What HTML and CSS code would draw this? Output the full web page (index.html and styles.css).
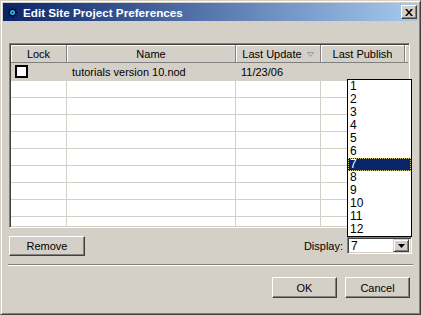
FILE: index.html
```html
<!DOCTYPE html>
<html lang="en">
<head>
    <meta charset="UTF-8">
    <title>Edit Site Project Preferences</title>
    <link rel="stylesheet" href="styles.css">
</head>
<body>
    <div class="window">
        <div class="titlebar">
            <svg class="app-icon" width="11" height="11" viewBox="0 0 11 11">
                <path d="M5.5 0 L6.8 2.8 L9.5 1.5 L8.2 4.2 L11 5.5 L8.2 6.8 L9.5 9.5 L6.8 8.2 L5.5 11 L4.2 8.2 L1.5 9.5 L2.8 6.8 L0 5.5 L2.8 4.2 L1.5 1.5 L4.2 2.8 Z" fill="#000028"/>
                <circle cx="5.5" cy="5.5" r="2.5" fill="#20c8d8"/>
                <circle cx="5.5" cy="5.5" r="1" fill="#103090"/>
            </svg>
            <span class="title">Edit Site Project Preferences</span>
            <button class="close-btn">
                <svg width="8" height="7" viewBox="0 0 8 7">
                    <path d="M0 0 H2 L4 2.5 L6 0 H8 L5 3.5 L8 7 H6 L4 4.5 L2 7 H0 L3 3.5 Z" fill="#000"/>
                </svg>
            </button>
        </div>

        <div class="content">
            <div class="list">
                <div class="list-head">
                    <div class="th">Lock</div>
                    <div class="th">Name</div>
                    <div class="th">Last Update
                        <svg class="sort-icon" width="7" height="5" viewBox="0 0 7 5">
                            <path d="M0.5 0.5 H6.5 L3.5 4.5 Z" fill="none" stroke="#9a9a9a"/>
                        </svg>
                    </div>
                    <div class="th">Last Publish</div>
                    <div class="th th-fill"></div>
                </div>
                <div class="list-body">
                    <div class="row selected">
                        <div class="cell"><span class="checkbox"></span></div>
                        <div class="cell">tutorials version 10.nod</div>
                        <div class="cell">11/23/06</div>
                        <div class="cell"></div>
                        <div class="cell fill"></div>
                    </div>
                    <div class="row"><div class="cell"></div><div class="cell"></div><div class="cell"></div><div class="cell"></div><div class="cell fill"></div></div>
                    <div class="row"><div class="cell"></div><div class="cell"></div><div class="cell"></div><div class="cell"></div><div class="cell fill"></div></div>
                    <div class="row"><div class="cell"></div><div class="cell"></div><div class="cell"></div><div class="cell"></div><div class="cell fill"></div></div>
                    <div class="row"><div class="cell"></div><div class="cell"></div><div class="cell"></div><div class="cell"></div><div class="cell fill"></div></div>
                    <div class="row"><div class="cell"></div><div class="cell"></div><div class="cell"></div><div class="cell"></div><div class="cell fill"></div></div>
                    <div class="row"><div class="cell"></div><div class="cell"></div><div class="cell"></div><div class="cell"></div><div class="cell fill"></div></div>
                    <div class="row"><div class="cell"></div><div class="cell"></div><div class="cell"></div><div class="cell"></div><div class="cell fill"></div></div>
                    <div class="row"><div class="cell"></div><div class="cell"></div><div class="cell"></div><div class="cell"></div><div class="cell fill"></div></div>
                    <div class="row"><div class="cell"></div><div class="cell"></div><div class="cell"></div><div class="cell"></div><div class="cell fill"></div></div>
                </div>
            </div>

            <div class="controls">
                <button class="btn btn-remove">Remove</button>
                <span class="display-label">Display:</span>
                <div class="combo">
                    <span class="combo-value">7</span>
                    <span class="combo-arrow">
                        <svg width="7" height="4" viewBox="0 0 7 4"><path d="M0 0 H7 L3.5 4 Z" fill="#000"/></svg>
                    </span>
                    <ul class="dropdown">
                        <li>1</li>
                        <li>2</li>
                        <li>3</li>
                        <li>4</li>
                        <li>5</li>
                        <li>6</li>
                        <li class="active">7</li>
                        <li>8</li>
                        <li>9</li>
                        <li>10</li>
                        <li>11</li>
                        <li>12</li>
                    </ul>
                </div>
            </div>

            <div class="separator"></div>

            <div class="buttons">
                <button class="btn btn-dialog">OK</button>
                <button class="btn btn-dialog">Cancel</button>
            </div>
        </div>
    </div>
</body>
</html>
```

FILE: styles.css
```css
* {
    box-sizing: border-box;
}

body {
    margin: 0;
    background-color: #D4D0C8;
    font-family: "Liberation Sans", Arial, sans-serif;
    font-size: 11px;
    color: #000000;
}

.window {
    width: 421px;
    height: 315px;
    padding: 1px;
    background-color: #D4D0C8;
    border: 1px solid;
    border-color: #D4D0C8 #404040 #404040 #D4D0C8;
    box-shadow: inset 1px 1px #FFFFFF, inset -1px -1px #808080;
}

.titlebar {
    height: 18px;
    margin: 1px;
    display: flex;
    align-items: center;
    padding-left: 4px;
    padding-right: 1px;
    background: linear-gradient(to right, #0A246A, #A6CAF0);
}

.app-icon {
    flex-shrink: 0;
}

.title {
    margin-left: 5px;
    color: #FFFFFF;
    font-weight: bold;
    font-size: 11.7px;
    white-space: nowrap;
}

.close-btn {
    margin-left: auto;
    width: 16px;
    height: 14px;
    padding: 0;
    display: flex;
    align-items: center;
    justify-content: center;
    background-color: #D4D0C8;
    border: 1px solid;
    border-color: #FFFFFF #404040 #404040 #FFFFFF;
    box-shadow: inset -1px -1px #808080;
}

.content {
    padding: 21px 9px 0 7px;
    display: flex;
    flex-direction: column;
}

/* list view */
.list {
    height: 185px;
    border: 1px solid;
    border-color: #808080 #FFFFFF #FFFFFF #808080;
    box-shadow: inset 1px 1px #404040, inset -1px -1px #D4D0C8;
    padding: 1px;
    background-color: #FFFFFF;
    overflow: hidden;
}

.list-head,
.row {
    display: grid;
    grid-template-columns: 56px 169px 85px 84px 1fr;
}

.list-head {
    height: 18px;
    background-color: #D4D0C8;
}

.th {
    display: flex;
    align-items: center;
    justify-content: center;
    gap: 5px;
    border-right: 1px solid #808080;
    border-bottom: 1px solid #808080;
    box-shadow: inset 1px 1px #FFFFFF;
    white-space: nowrap;
}

.th-fill {
    border-right: none;
}

.sort-icon {
    margin-top: 1px;
}

.row {
    height: 17px;
}

.row.selected {
    height: 18px;
    background-color: #D4D0C8;
}

.cell {
    display: flex;
    align-items: center;
    padding-left: 5px;
    border-right: 1px solid #D4D0C8;
    border-bottom: 1px solid #D4D0C8;
    white-space: nowrap;
}

.cell.fill {
    border-right: none;
}

.checkbox {
    width: 13px;
    height: 13px;
    margin-left: -1px;
    background-color: #FFFFFF;
    border: 2px solid #000000;
}

/* controls row */
.controls {
    margin-top: 8px;
    display: flex;
    align-items: flex-start;
}

.btn {
    padding: 0;
    font-family: inherit;
    font-size: 11px;
    color: #000000;
    background-color: #D4D0C8;
    border: 1px solid;
    border-color: #FFFFFF #404040 #404040 #FFFFFF;
    box-shadow: inset -1px -1px #808080;
}

.btn-remove {
    width: 76px;
    height: 20px;
}

.display-label {
    margin-left: auto;
    margin-right: 4px;
    align-self: center;
}

.combo {
    position: relative;
    width: 65px;
    height: 17px;
    margin-top: 1px;
    margin-right: -2px;
    display: flex;
    align-items: center;
    border: 1px solid;
    border-color: #808080 #FFFFFF #FFFFFF #808080;
    box-shadow: inset 1px 1px #404040, inset -1px -1px #D4D0C8;
    padding: 2px 2px 2px 3px;
    background-color: #FFFFFF;
}

.combo-value {
    flex: 1;
    font-size: 12px;
}

.combo-arrow {
    width: 16px;
    height: 13px;
    display: flex;
    align-items: center;
    justify-content: center;
    background-color: #D4D0C8;
    border: 1px solid;
    border-color: #D4D0C8 #404040 #404040 #D4D0C8;
    box-shadow: inset 1px 1px #FFFFFF, inset -1px -1px #808080;
}

.dropdown {
    position: absolute;
    left: -1px;
    bottom: 100%;
    width: 65px;
    margin: 0 0 1px;
    padding: 0;
    list-style: none;
    background-color: #FFFFFF;
    border: 1px solid #000000;
    font-size: 12px;
}

.dropdown li {
    height: 13px;
    line-height: 13px;
    padding-left: 2px;
}

.dropdown li.active {
    background-color: #0A246A;
    color: #FFFFFF;
    outline: 1px dotted #D8D090;
    outline-offset: -1px;
}

.separator {
    margin: 8px -3px 0 -1px;
    border-top: 1px solid #808080;
    border-bottom: 1px solid #FFFFFF;
}

.buttons {
    margin-top: 11px;
    display: flex;
    justify-content: flex-end;
    gap: 8px;
}

.btn-dialog {
    width: 65px;
    height: 21px;
}
```
